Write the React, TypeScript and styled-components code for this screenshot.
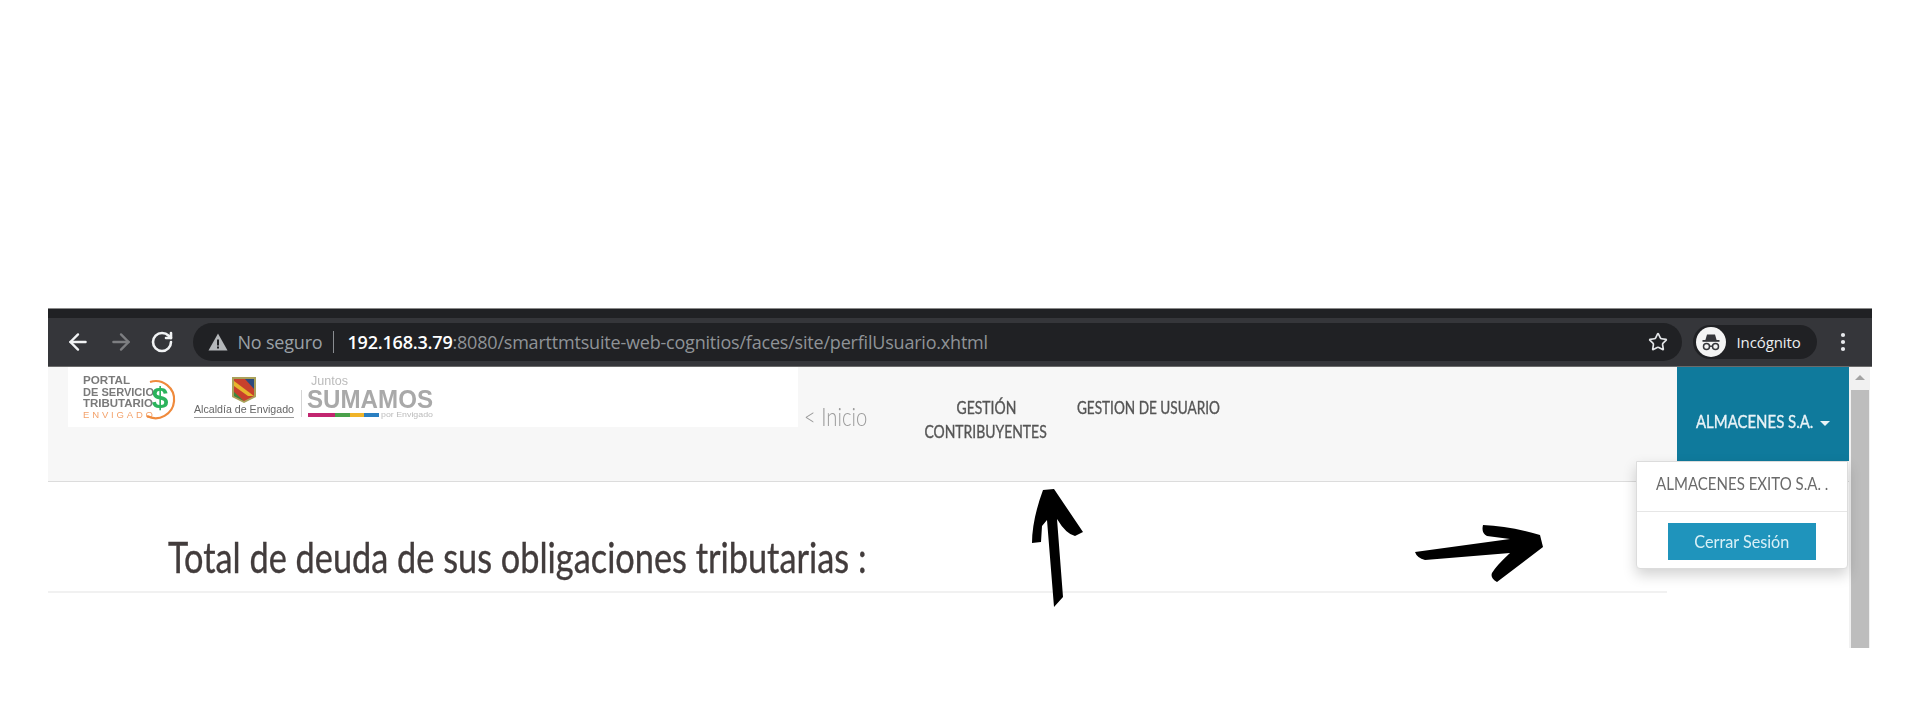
import styled, { createGlobalStyle } from "styled-components";
import { ArrowLeft, ArrowRight, RotateCw, Star } from "lucide-react";

const GlobalStyle = createGlobalStyle`
  html, body {
    margin: 0;
    background: #fff;
    overflow: hidden;
  }
`;

const narrow = `Lato, "Liberation Sans", sans-serif`;

const Page = styled.div`
  height: 708px;
  box-sizing: border-box;
  padding: 308px 48px 0 48px;
  position: relative;
`;

const TabStrip = styled.div`
  height: 10px;
  background: #202124;
  border-top: 1px solid #8a8a8a;
  box-sizing: border-box;
`;

const Toolbar = styled.div`
  height: 49px;
  background: #35363a;
  display: flex;
  align-items: center;
  border-bottom: 1px solid #6b6b6b;
  box-sizing: border-box;
  padding-left: 17px;
  color: #fff;
`;

const NavIcon = styled.span<{ $dim?: boolean }>`
  width: 42.5px;
  height: 26px;
  flex: none;
  display: flex;
  align-items: center;
  color: ${(props) => (props.$dim ? "#7d7e81" : "#f1f3f4")};
`;

const Omnibox = styled.div`
  width: 1489px;
  height: 38px;
  border-radius: 19px;
  background: #202124;
  display: flex;
  align-items: center;
  box-sizing: border-box;
  padding: 0 14px 0 15px;
  font: 18px "Open Sans", "Noto Sans", sans-serif;
  letter-spacing: -0.2px;
`;

const Insecure = styled.span`
  color: #9aa0a6;
  margin-left: 10px;
  padding-right: 11px;
  border-right: 1px solid #8a8d91;
  line-height: 22px;
`;

const Url = styled.span`
  color: #8f9397;
  margin-left: 13px;
  flex: 1;
  white-space: nowrap;
`;

const Host = styled.span`
  color: #fff;
  font-weight: 600;
`;

const ProfilePill = styled.div`
  width: 124px;
  height: 34px;
  margin-left: 11px;
  border-radius: 17px;
  background: #202124;
  display: flex;
  align-items: center;
  gap: 11px;
  padding-left: 3px;
  box-sizing: border-box;
  font: 15px "Open Sans", "Noto Sans", sans-serif;
  letter-spacing: -0.1px;
  color: #eceef0;
`;

const Avatar = styled.svg`
  width: 30px;
  height: 30px;
  flex: none;
`;

const Dots = styled.svg`
  width: 6px;
  height: 20px;
  margin-left: 23px;
`;

const Viewport = styled.div`
  display: grid;
  grid-template-columns: 1fr 23px;
  height: 281px;
  overflow: hidden;
`;

const Main = styled.div`
  min-width: 0;
`;

const Nav = styled.nav`
  height: 114px;
  background: #f7f7f7;
  border-bottom: 1px solid #dcdcdc;
  display: flex;
  align-items: flex-start;
  padding-left: 20px;
  position: relative;
`;

const LogoPanel = styled.div`
  width: 730px;
  height: 60px;
  flex: none;
  background: #fff;
  filter: blur(0.45px);
`;

// the site's thin rounded font is not available, so Lato gets squeezed
const Condensed = styled.span<{ $scale: number; $origin?: string; $width?: number; $heavy?: boolean }>`
  display: inline-block;
  white-space: nowrap;
  width: ${(props) => (props.$width ? `${props.$width}px` : "auto")};
  transform: scaleX(${(props) => props.$scale});
  transform-origin: ${(props) => props.$origin || "center"};
  -webkit-text-stroke: ${(props) => (props.$heavy ? "0.35px" : "0")};
`;

const Inicio = styled.a`
  margin: 35px 0 0 6px;
  width: 102px;
  font: 300 25px/28px ${narrow};
  color: #9b9b9b;
`;

const MenuItem = styled.a<{ $width: number }>`
  width: ${(props) => props.$width}px;
  padding-top: 29px;
  font: 17px/24px ${narrow};
  color: #555;
  flex: none;
  display: flex;
  flex-direction: column;
  align-items: center;
`;

const UserMenu = styled.div`
  margin-left: auto;
  width: 172px;
  height: 94px;
  box-sizing: border-box;
  padding: 40px 0 0 19px;
  background: #0f7a9c;
  color: #e9f3f7;
  font: 18px/28px ${narrow};
  position: relative;
  flex: none;
`;

const Caret = styled.span`
  display: inline-block;
  margin-left: 4px;
  vertical-align: middle;
  border-top: 5px solid #e9f3f7;
  border-left: 5px solid transparent;
  border-right: 5px solid transparent;
`;

const Dropdown = styled.div`
  position: absolute;
  top: 94px;
  right: 1px;
  width: 212px;
  height: 108px;
  box-sizing: border-box;
  background: #fff;
  border: 1px solid #dcdcdc;
  border-radius: 0 0 4px 4px;
  box-shadow: 0 6px 14px rgba(0, 0, 0, 0.18);
  display: flex;
  flex-direction: column;
  align-items: center;
`;

const CompanyName = styled.div`
  height: 49px;
  width: 100%;
  flex: none;
  border-bottom: 1px solid #e6e6e6;
  display: flex;
  justify-content: center;
  font: 18px/42px ${narrow};
  color: #6a6a6a;
`;

const LogoutButton = styled.button`
  margin-top: 11px;
  width: 148px;
  height: 37px;
  border: 0;
  padding: 0 0 2px;
  background: #1f94bc;
  color: #d9f0f7;
  font: 18px ${narrow};
`;

const Heading = styled.h1`
  margin: 51px 0 0;
  padding: 0 0 0 120px;
  height: 58px;
  width: 1499px;
  border-bottom: 2px solid #f1f1f1;
  font: 400 42px/48px ${narrow};
  color: #423c3c;
`;

const Scrollbar = styled.div`
  background: #f1f1f1;
  margin-right: 2px;
  display: flex;
  flex-direction: column;
  align-items: center;
`;

const ScrollUp = styled.span`
  margin-top: 8px;
  border-bottom: 5px solid #a3a3a3;
  border-left: 5px solid transparent;
  border-right: 5px solid transparent;
`;

const ScrollThumb = styled.div`
  margin-top: 10px;
  width: 18px;
  flex: 1;
  background: #bdbdbd;
`;

const Scribble = styled.svg`
  position: absolute;
  left: 0;
  top: 0;
  pointer-events: none;
`;

function IncognitoBadge() {
  return (
    <Avatar viewBox="0 0 30 30">
      <circle cx="15" cy="15" r="15" fill="#f4f4f4" />
      <path d="M11 7.5h8l1.6 5.5H9.4z" fill="#35363a" />
      <rect x="6.5" y="13" width="17" height="1.8" fill="#35363a" />
      <circle cx="10.5" cy="19.5" r="3" fill="none" stroke="#35363a" strokeWidth="1.5" />
      <circle cx="19.5" cy="19.5" r="3" fill="none" stroke="#35363a" strokeWidth="1.5" />
      <path d="M13.5 19.2h3" stroke="#35363a" strokeWidth="1.4" />
    </Avatar>
  );
}

function Logos() {
  return (
    <svg width="370" height="60" viewBox="0 0 370 60" fontFamily="'Liberation Sans', sans-serif">
      <g fill="#7a7a7a" fontWeight="700" fontSize="11">
        <text x="15" y="17" textLength="47" lengthAdjust="spacingAndGlyphs">PORTAL</text>
        <text x="15" y="28.5" textLength="71" lengthAdjust="spacingAndGlyphs">DE SERVICIO</text>
        <text x="15" y="40" textLength="70" lengthAdjust="spacingAndGlyphs">TRIBUTARIO</text>
      </g>
      <text x="15" y="51" fontSize="9.5" fill="#f3a26b" textLength="70">
        ENVIGADO
      </text>
      <path d="M82 15a18.5 18.5 0 1 1 -3 34" fill="none" stroke="#ef8a3c" strokeWidth="2.2" />
      <text x="92" y="41" fontSize="30" fontWeight="700" fill="#2bb35c" textAnchor="middle">
        $
      </text>

      <path d="M164 10h24v20l-12 6-12-6z" fill="#a9a15a" />
      <path d="M166 12h20v17l-10 5-10-5z" fill="#c8402c" />
      <path d="M166 14l20 15h-6l-14-10z" fill="#e7b62c" />
      <path d="M177 12h9v10z" fill="#2c4a7e" />
      <path d="M166 25l10 9-10-5z" fill="#3c8a3e" />
      <text x="126" y="46" fontSize="11.5" fill="#666" textLength="100" lengthAdjust="spacingAndGlyphs">
        Alcaldía de Envigado
      </text>
      <rect x="126" y="50" width="100" height="1" fill="#999" />
      <rect x="233" y="23" width="1" height="27" fill="#d5d5d5" />

      <text x="243" y="18" fontSize="13" fill="#bbb" textLength="37" lengthAdjust="spacingAndGlyphs">Juntos</text>
      <text x="239" y="41" fontSize="25" fontWeight="700" fill="#a9a9a9" textLength="126" lengthAdjust="spacingAndGlyphs">
        SUMAMOS
      </text>
      <rect x="240" y="46" width="27" height="4" fill="#c2256f" />
      <rect x="267" y="46" width="15" height="4" fill="#4aa04a" />
      <rect x="282" y="46" width="14" height="4" fill="#f0b429" />
      <rect x="296" y="46" width="15" height="4" fill="#2b7fc1" />
      <text x="313" y="50" fontSize="8" fill="#bbb" textLength="52" lengthAdjust="spacingAndGlyphs">por Envigado</text>
    </svg>
  );
}

export default function App() {
  return (
    <Page>
      <GlobalStyle />
      <TabStrip />
      <Toolbar>
        <NavIcon>
          <ArrowLeft size={26} strokeWidth={2.2} />
        </NavIcon>
        <NavIcon $dim>
          <ArrowRight size={26} strokeWidth={2.2} />
        </NavIcon>
        <NavIcon>
          <RotateCw size={24} strokeWidth={2.6} />
        </NavIcon>
        <Omnibox>
          <svg width="20" height="18" viewBox="0 0 20 18">
            <path d="M10 0.5L19.5 17.5H0.5z" fill="#b4b7ba" />
            <rect x="9" y="6.5" width="2" height="6" fill="#202124" />
            <rect x="9" y="13.5" width="2" height="2" fill="#202124" />
          </svg>
          <Insecure>No seguro</Insecure>
          <Url>
            <Host>192.168.3.79</Host>:8080/smarttmtsuite-web-cognitios/faces/site/perfilUsuario.xhtml
          </Url>
          <Star size={20} color="#e4e6e8" strokeWidth={2} />
        </Omnibox>
        <ProfilePill>
          <IncognitoBadge />
          Incógnito
        </ProfilePill>
        <Dots viewBox="0 0 6 20">
          <circle cx="3" cy="3" r="2.1" fill="#e8eaed" />
          <circle cx="3" cy="10" r="2.1" fill="#e8eaed" />
          <circle cx="3" cy="17" r="2.1" fill="#e8eaed" />
        </Dots>
      </Toolbar>
      <Viewport>
        <Main>
          <Nav>
            <LogoPanel>
              <Logos />
            </LogoPanel>
            <Inicio>
              <Condensed $scale={0.81} $origin="left">
                &lt; Inicio
              </Condensed>
            </Inicio>
            <MenuItem $width={160}>
              <Condensed $scale={0.82} $heavy>
                GESTIÓN
              </Condensed>
              <Condensed $scale={0.82} $heavy>
                CONTRIBUYENTES
              </Condensed>
            </MenuItem>
            <MenuItem $width={164}>
              <Condensed $scale={0.8} $heavy>
                GESTION DE USUARIO
              </Condensed>
            </MenuItem>
            <UserMenu>
              <Condensed $scale={0.83} $origin="left" $width={120} $heavy>
                ALMACENES S.A.
              </Condensed>
              <Caret />
              <Dropdown>
                <CompanyName>
                  <Condensed $scale={0.835}>ALMACENES EXITO S.A. .</Condensed>
                </CompanyName>
                <LogoutButton>
                  <Condensed $scale={0.9}>Cerrar Sesión</Condensed>
                </LogoutButton>
              </Dropdown>
            </UserMenu>
          </Nav>
          <Heading>
            <Condensed $scale={0.817} $origin="left" $heavy>
              Total de deuda de sus obligaciones tributarias :
            </Condensed>
          </Heading>
        </Main>
        <Scrollbar>
          <ScrollUp />
          <ScrollThumb />
        </Scrollbar>
      </Viewport>
      <Scribble width="1920" height="708" viewBox="0 0 1920 708">
        <path
          d="M1043 490L1054 489L1083 532L1075 536Q1066 534 1057 519L1063 597L1054 607L1047 520L1042 526L1041 542L1032 543Q1032 520 1043 490z"
          fill="#000"
        />
        <path
          d="M1415 552L1510 539L1487 536Q1481 533 1483 525Q1510 526 1540 535L1543 547L1497 582Q1490 578 1492 573Q1496 566 1510 553L1425 560Q1417 558 1415 552z"
          fill="#000"
        />
      </Scribble>
    </Page>
  );
}
